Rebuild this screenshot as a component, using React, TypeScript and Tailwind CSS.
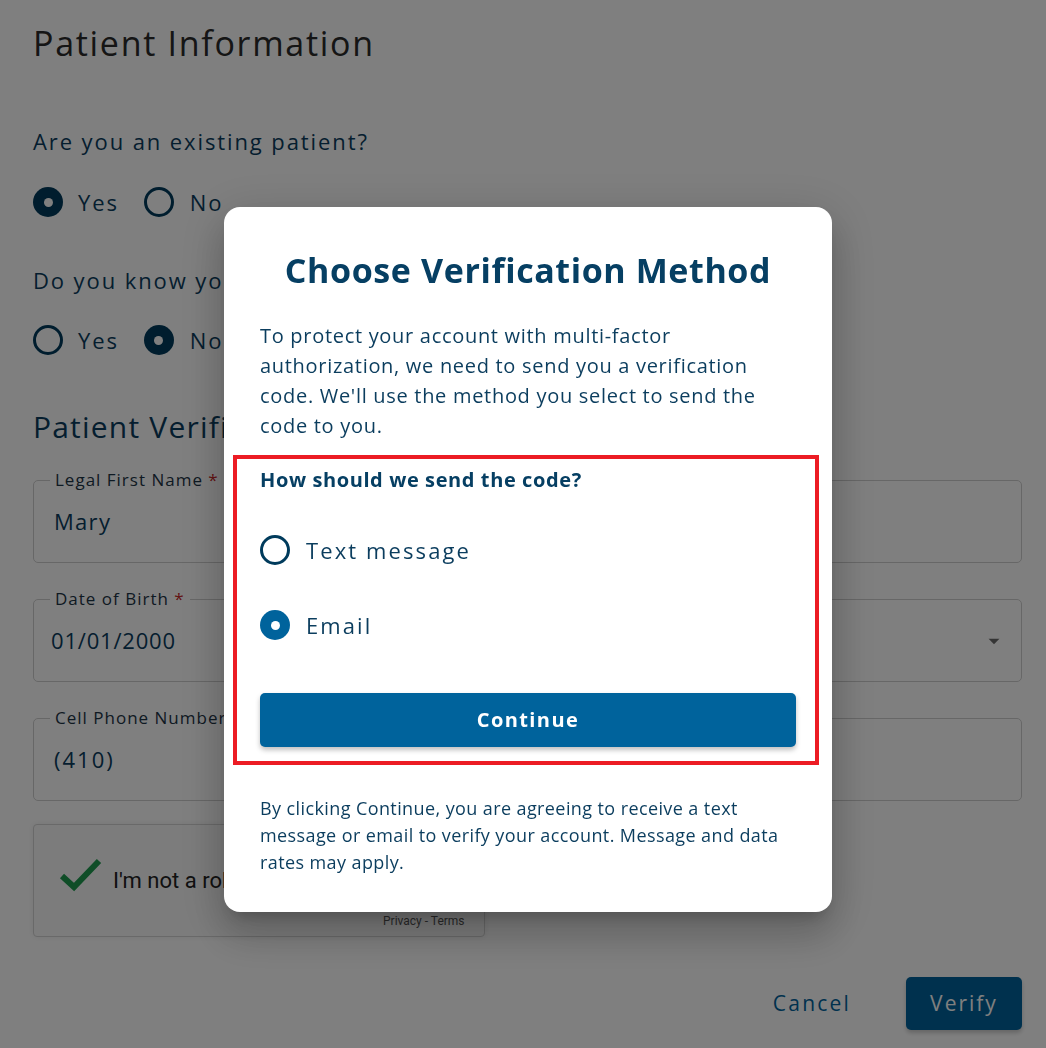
const navy = 'text-[#0b3d5e]';

const Radio = ({ checked, fill = 'bg-[#003b5c]' }: { checked?: boolean; fill?: string }) =>
  checked ? (
    <span className={`w-[30px] h-[30px] rounded-full ${fill} flex items-center justify-center shrink-0`}>
      <span className="w-[9px] h-[9px] rounded-full bg-white" />
    </span>
  ) : (
    <span className="w-[30px] h-[30px] rounded-full border-[3px] border-[#003b5c] shrink-0" />
  );

const Field = ({ label, required, value, pad = 'pl-[20px]', track = 'tracking-[1.3px]', children }: { label?: string; required?: boolean; value?: string; pad?: string; track?: string; children?: React.ReactNode }) => (
  <div className={`relative h-[83px] rounded-[5px] border border-[#cfcfcf] flex items-center ${pad} pr-[18px]`}>
    {label && (
      <span className="absolute -top-[12px] left-[16px] bg-white px-[5px] text-[17px] leading-[22px] tracking-[1px] text-[#1d3446]">
        {label}
        {required && <span className="text-[#c62828]"> *</span>}
      </span>
    )}
    <span className={`flex-1 text-[22px] ${track} text-[#0b3d5e]`}>{value}</span>
    {children}
  </div>
);

export default function App() {
  return (
    <div className="relative min-h-[1048px] bg-white font-['Open_Sans',sans-serif] overflow-hidden">
      <div className="px-[33px] pt-[22px]">
        <h1 className="text-[34px] leading-[42px] tracking-[1.7px] text-[#2a2a2a]">Patient Information</h1>

        <p className={`mt-[62px] text-[22px] leading-[30px] tracking-[1.9px] ${navy}`}>Are you an existing patient?</p>
        <div className={`mt-[31px] flex items-center h-[30px] text-[22px] tracking-[1.9px] ${navy}`}>
          <Radio checked />
          <span className="ml-[15px] mr-[25px]">Yes</span>
          <Radio />
          <span className="ml-[16px]">No</span>
        </div>

        <p className={`mt-[48px] text-[22px] leading-[30px] tracking-[1.9px] ${navy}`}>Do you know your patient ID?</p>
        <div className={`mt-[30px] flex items-center h-[30px] text-[22px] tracking-[1.9px] ${navy}`}>
          <Radio />
          <span className="ml-[15px] mr-[25px]">Yes</span>
          <Radio checked />
          <span className="ml-[16px]">No</span>
        </div>

        <h2 className={`mt-[53px] text-[30px] leading-[38px] tracking-[1.2px] ${navy}`}>Patient Verification</h2>

        <div className="mt-[34px] grid grid-cols-2 gap-x-[16px] gap-y-[36px] w-[989px]">
          <Field label="Legal First Name" required value="Mary" />
          <Field value="" />
          <Field label="Date of Birth" required value="01/01/2000" pad="pl-[17px]" track="tracking-[0.8px]" />
          <Field value="">
            <svg width="26" height="26" viewBox="0 0 24 24" className="fill-[#6b6b6b] -mr-[4px]">
              <path d="M7 10l5 5 5-5z" />
            </svg>
          </Field>
          <Field label="Cell Phone Number" required value="(410)" track="tracking-[2px]" />
          <Field value="" />
        </div>

        <div className="mt-[23px] w-[452px] h-[113px] rounded-[4px] border border-[#d3d3d3] bg-[#f9f9f9] shadow-[0_0_6px_rgba(0,0,0,0.08)] flex flex-col font-['Roboto',sans-serif]">
          <div className="flex-1 flex items-center pl-[24px] pt-[22px]">
            <svg width="46" height="40" viewBox="0 0 46 40" className="shrink-0 -mt-[12px]">
              <path d="M4 21 L16 32 L41 6" fill="none" stroke="#1e9b4f" strokeWidth="6" />
            </svg>
            <span className="ml-[9px] text-[22px] text-[#222]">I'm not a robot</span>
          </div>
          <div className="pl-[349px] pb-[8px] text-[12px] leading-[14px] text-[#555]">Privacy - Terms</div>
        </div>

        <div className="mt-[40px] flex items-center justify-end gap-[55px] w-[989px]">
          <span className="text-[21px] tracking-[2.2px] text-[#00639c]">Cancel</span>
          <button className="w-[116px] h-[53px] rounded-[5px] bg-[#00639c] text-white text-[21px] tracking-[2px] shadow-[0_3px_4px_rgba(0,0,0,0.2)]">
            Verify
          </button>
        </div>
      </div>

      <div className="fixed inset-0 bg-black/50 flex justify-center items-start pt-[207px] pl-[10px]">
        <div className="w-[608px] rounded-[16px] bg-white px-[36px] pt-[43px] pb-[36px] shadow-[0_11px_15px_-7px_rgba(0,0,0,0.2),0_24px_38px_3px_rgba(0,0,0,0.14),0_9px_46px_8px_rgba(0,0,0,0.12)]">
          <h3 className="text-center text-[34px] leading-[40px] font-bold tracking-[0.6px] text-[#063f63]">Choose Verification Method</h3>
          <p className={`mt-[31px] max-w-[525px] text-[20px] leading-[30px] tracking-[0.7px] ${navy}`}>
            To protect your account with multi-factor authorization, we need to send you a verification code. We'll use the method you select to send the code to you.
          </p>

          <div className="mt-[14px] -ml-[27px] -mr-[23px] border-4 border-[#ec1c24] pl-[23px] pr-[19px] pt-[7px] pb-[14px]">
            <p className="text-[20px] leading-[28px] font-bold tracking-[0.6px] text-[#063f63]">How should we send the code?</p>
            <div className={`mt-[41px] flex items-center h-[30px] text-[22px] tracking-[2.1px] ${navy}`}>
              <Radio />
              <span className="ml-[16px]">Text message</span>
            </div>
            <div className={`mt-[45px] flex items-center h-[30px] text-[22px] tracking-[2.1px] ${navy}`}>
              <Radio checked fill="bg-[#00639c]" />
              <span className="ml-[16px]">Email</span>
            </div>
            <button className="mt-[53px] w-full h-[54px] rounded-[5px] bg-[#00639c] text-white text-[20px] font-bold tracking-[1.4px] shadow-[0_3px_5px_rgba(0,0,0,0.25)]">
              Continue
            </button>
          </div>

          <p className={`mt-[30px] text-[18px] leading-[27px] tracking-[0.4px] ${navy}`}>
            By clicking Continue, you are agreeing to receive a text message or email to verify your account. Message and data rates may apply.
          </p>
        </div>
      </div>
    </div>
  );
}
